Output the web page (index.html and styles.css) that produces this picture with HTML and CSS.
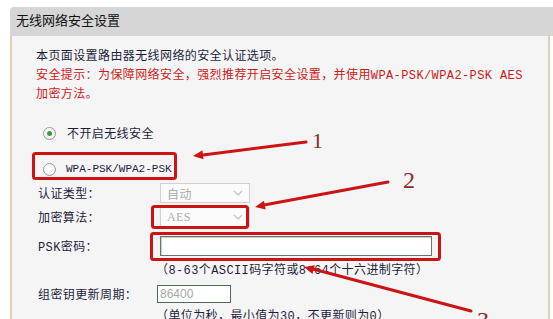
FILE: index.html
```html
<!DOCTYPE html>
<html>
<head>
    <meta charset="UTF-8">
    <title>无线网络安全设置</title>
    <link rel="stylesheet" href="styles.css">
</head>
<body>
    <div class="panel">
        <div class="title">无线网络安全设置</div>
        <div class="content">
            <p class="intro">本页面设置路由器无线网络的安全认证选项。<br>
                <span class="warn">安全提示：为保障网络安全，强烈推荐开启安全设置，并使用WPA-PSK/WPA2-PSK AES<br>加密方法。</span></p>

            <div class="radio-row first"><span class="radio on"></span>不开启无线安全</div>
            <div class="radio-row second"><span class="radio"></span><span class="mode">WPA-PSK/WPA2-PSK</span></div>

            <div class="field">
                <span class="label">认证类型：</span>
                <div class="select"><span>自动</span><svg class="chev" width="10" height="6" viewBox="0 0 10 6"><path d="M1 1 L5 5 L9 1" fill="none" stroke="#c4c4c4" stroke-width="1.3"/></svg></div>
            </div>
            <div class="field">
                <span class="label">加密算法：</span>
                <div class="select"><span class="serif">AES</span><svg class="chev" width="10" height="6" viewBox="0 0 10 6"><path d="M1 1 L5 5 L9 1" fill="none" stroke="#c4c4c4" stroke-width="1.3"/></svg></div>
            </div>
            <div class="field tall">
                <span class="label">PSK密码：</span>
                <input class="psk" type="text" value="">
            </div>
            <div class="hint">（8-63个ASCII码字符或8-64个十六进制字符）</div>
            <div class="field group">
                <span class="label">组密钥更新周期：</span>
                <input class="period" type="text" value="86400" disabled>
            </div>
            <div class="hint last">（单位为秒，最小值为30，不更新则为0）</div>
        </div>
    </div>

    <!-- annotations drawn over the screenshot -->
    <svg class="marks" width="553" height="319" viewBox="0 0 553 319">
        <g fill="none" stroke="#cc1414" stroke-width="3" stroke-linejoin="round">
            <rect x="33.5" y="153.5" width="142" height="25" rx="2"/>
            <rect x="152.5" y="206.5" width="95" height="21" rx="2"/>
            <rect x="151.5" y="233.5" width="288" height="26" rx="2"/>
        </g>
        <g stroke="#cc1414" stroke-width="3" stroke-linecap="round">
            <line x1="306" y1="142" x2="203" y2="155"/>
            <line x1="388" y1="182" x2="264" y2="205"/>
            <line x1="471" y1="311" x2="313" y2="269"/>
        </g>
        <g fill="#cc1414">
            <polygon points="193,156 203.5,159.3 202.4,150.3"/>
            <polygon points="255,207 265.7,209.6 264,200.7"/>
            <polygon points="304,267 312.5,273.9 314.8,265.2"/>
        </g>
        <g class="num" fill="#8e2c2c">
            <text x="312" y="148" font-size="22">1</text>
            <text x="403" y="188" font-size="24">2</text>
            <text x="477" y="328" font-size="24">3</text>
        </g>
    </svg>
</body>
</html>
```

FILE: styles.css
```css
body {
    margin: 0;
    height: 319px;
    overflow: hidden;
    position: relative;
    background-color: #ffffff;
    color: #1e1e3c;
    font-family: "Liberation Mono", "Noto Sans CJK SC", monospace;
    font-size: 12px;
}

.panel {
    margin: 7px 0 0 10px;
    width: 540px;
}

.title {
    height: 29px;
    line-height: 29px;
    margin-right: -4px;
    padding-left: 6px;
    background-color: #d6d6d6;
    border-radius: 4px 0 0 0;
    font-size: 13px;
    color: #111111;
}

.content {
    height: 271px;
    padding: 12px 0 0 24px;
    overflow: hidden;
    background-color: #f5f5f5;
    border-left: 2px solid #e6cfaa;
    border-right: 2px solid #e6cfaa;
    letter-spacing: 0.4px;
}

.intro {
    margin: 0;
    line-height: 19px;
}

.warn {
    color: #cc1a1a;
}

.radio-row {
    display: flex;
    align-items: center;
    gap: 11px;
    height: 24px;
    padding-left: 7px;
}

.radio-row.first { margin-top: 16px; }
.radio-row.second { margin-top: 12px; gap: 10px; }

.mode {
    font-size: 11px;
    letter-spacing: 0;
}

.radio {
    width: 11px;
    height: 11px;
    border: 1px solid #9a9a9a;
    border-radius: 50%;
    background: radial-gradient(circle at 40% 35%, #ffffff 30%, #e4e4e4 100%);
    display: flex;
    align-items: center;
    justify-content: center;
}

.radio.on::after {
    content: "";
    width: 5px;
    height: 5px;
    border-radius: 50%;
    background-color: #3c9a3c;
}

.field {
    display: grid;
    grid-template-columns: 122px auto;
    align-items: center;
    justify-items: start;
    height: 24px;
    padding-left: 2px;
}

.field.tall { height: 34px; }
.field.group { height: 30px; }

.select {
    width: 84px;
    height: 18px;
    border: 1px solid #d0d0d0;
    background-color: #fbfbfb;
    display: flex;
    align-items: center;
    justify-content: space-between;
    padding-left: 4px;
    box-sizing: content-box;
    color: #ababab;
    font-family: "Noto Sans CJK SC", sans-serif;
}

.select span { margin-left: 2px; }
.select .serif { font-family: "Liberation Serif", serif; font-size: 12px; }

.chev {
    margin-right: 6px;
}

.psk {
    width: 270px;
    height: 18px;
    padding: 0;
    margin: 0;
    border: 1px solid #66766a;
    box-shadow: inset 1px 1px 1px #c8c8c8;
    background-color: #ffffff;
}

.period {
    width: 70px;
    height: 16px;
    padding: 0 0 0 2px;
    margin: 0 0 0 -3px;
    border: 1px solid #56685a;
    background-color: #ffffff;
    color: #a8a8a8;
    font-family: "Liberation Sans", sans-serif;
    font-size: 12px;
}

.hint {
    height: 16px;
    line-height: 16px;
    margin-left: 120px;
}

.marks {
    position: absolute;
    left: 0;
    top: 0;
    pointer-events: none;
}

.num text {
    font-family: "Liberation Serif", serif;
}
```
